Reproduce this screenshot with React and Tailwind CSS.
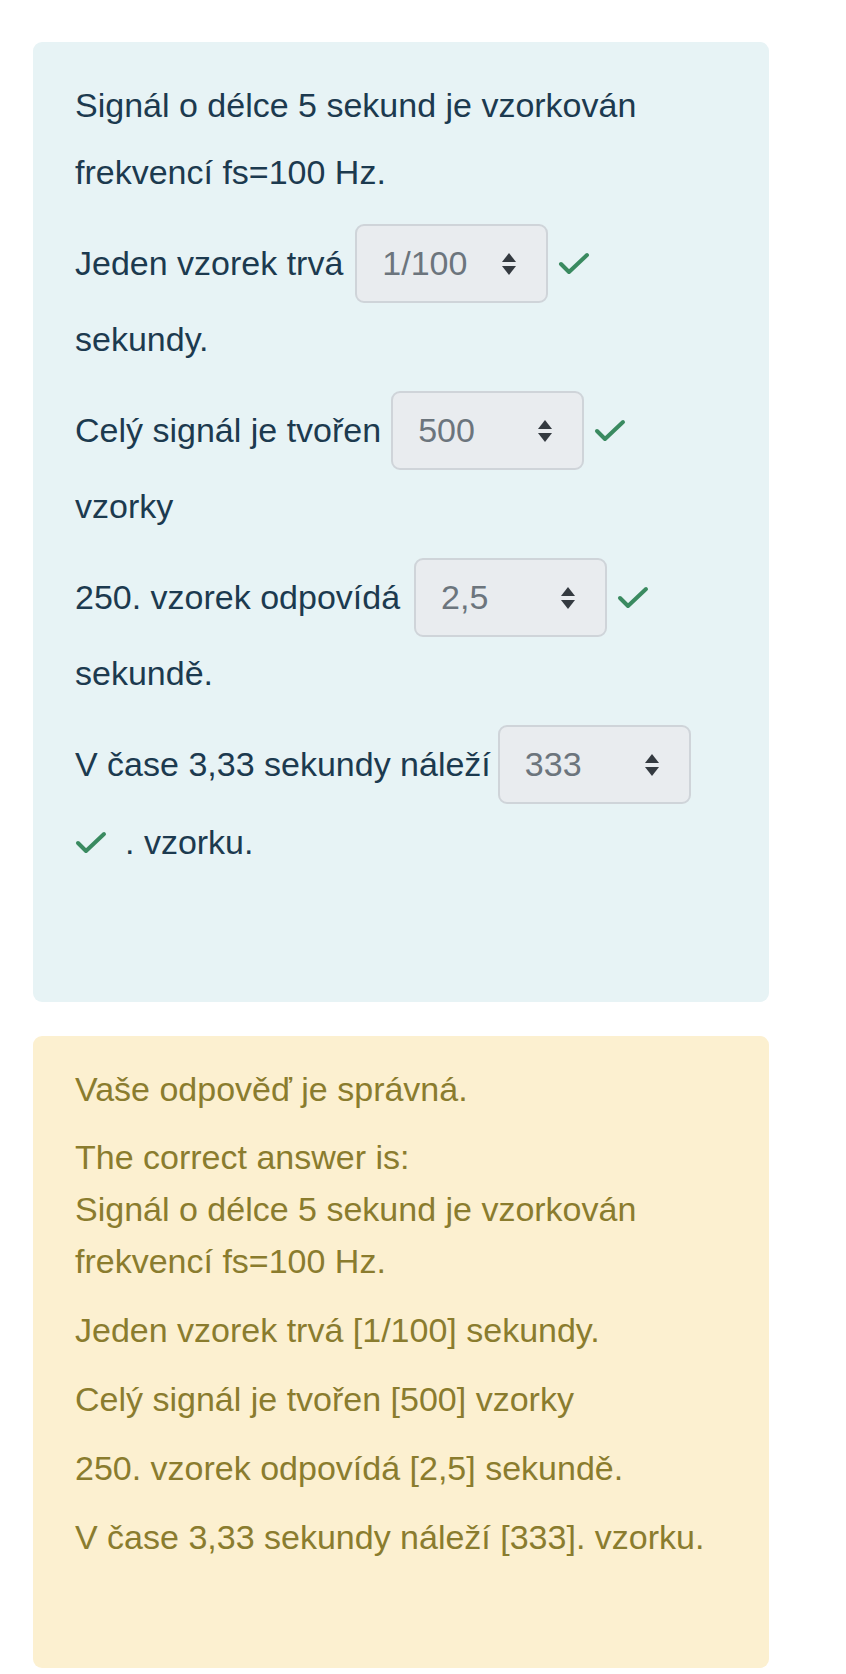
import React from "react";

const Check = ({ className = "" }) => (
  <svg
    className={className}
    width="32"
    height="24"
    viewBox="0 0 32 24"
    fill="none"
    stroke="#3a8a60"
    strokeWidth="4"
    strokeLinecap="round"
    strokeLinejoin="round"
  >
    <polyline points="3,12 11,20 29,3" />
  </svg>
);

const Select = ({ value }) => (
  <span className="inline-flex items-center justify-between w-[193px] h-[79px] rounded-[9px] border-2 border-[#cfd4d9] bg-[#e9ecef] pl-[25px] pr-[29px] text-[#6c757d] shrink-0">
    <span>{value}</span>
    <svg width="16" height="24" viewBox="0 0 16 24">
      <path d="M8 1 L15 10 H1 Z" fill="#343a40" />
      <path d="M1 14 H15 L8 23 Z" fill="#343a40" />
    </svg>
  </span>
);

const SelectRow = ({ label, value, gap }) => (
  <div className="flex items-center h-[79px] mt-[18px] whitespace-nowrap">
    <span>{label}</span>
    <span className={gap}>
      <Select value={value} />
    </span>
    <Check className="ml-[10px]" />
  </div>
);

const TextRow = ({ children, className = "" }) => (
  <div className={`flex items-center h-[67px] whitespace-nowrap ${className}`}>{children}</div>
);

const FRow = ({ children, className = "" }) => (
  <div className={`h-[52px] leading-[52px] whitespace-nowrap ${className}`}>{children}</div>
);

export default function App() {
  return (
    <div
      className="min-h-[1674px] bg-white pt-[42px] pl-[33px] text-[34px]"
      style={{ fontFamily: '"Liberation Sans", Arial, Helvetica, sans-serif' }}
    >
      <div className="w-[736px] rounded-[9px] bg-[#e7f3f5] text-[#1c3a4f] pl-[42px] pt-[30px] pb-[126px]">
        <TextRow>Signál o délce 5 sekund je vzorkován</TextRow>
        <TextRow>frekvencí fs=100 Hz.</TextRow>

        <SelectRow label="Jeden vzorek trvá" value="1/100" gap="ml-[12px]" />
        <TextRow className="mt-[3px]">sekundy.</TextRow>

        <SelectRow label="Celý signál je tvořen" value="500" gap="ml-[10px]" />
        <TextRow className="mt-[3px]">vzorky</TextRow>

        <SelectRow label="250. vzorek odpovídá" value="2,5" gap="ml-[14px]" />
        <TextRow className="mt-[3px]">sekundě.</TextRow>

        <div className="flex items-center h-[79px] mt-[18px] whitespace-nowrap">
          <span>V čase 3,33 sekundy náleží</span>
          <span className="ml-[7px]">
            <Select value="333" />
          </span>
        </div>
        <TextRow className="mt-[5px]">
          <Check />
          <span className="ml-[18px]">. vzorku.</span>
        </TextRow>
      </div>

      <div className="mt-[34px] w-[736px] rounded-[9px] bg-[#fcf0d0] text-[#8a7c2e] pl-[42px] pt-[27px] pb-[105px]">
        <FRow>Vaše odpověď je správná.</FRow>
        <FRow className="mt-[16px]">The correct answer is:</FRow>
        <FRow>Signál o délce 5 sekund je vzorkován</FRow>
        <FRow>frekvencí fs=100 Hz.</FRow>
        <FRow className="mt-[17px]">Jeden vzorek trvá [1/100] sekundy.</FRow>
        <FRow className="mt-[17px]">Celý signál je tvořen [500] vzorky</FRow>
        <FRow className="mt-[17px]">250. vzorek odpovídá [2,5] sekundě.</FRow>
        <FRow className="mt-[17px]">V čase 3,33 sekundy náleží [333]. vzorku.</FRow>
      </div>
    </div>
  );
}
